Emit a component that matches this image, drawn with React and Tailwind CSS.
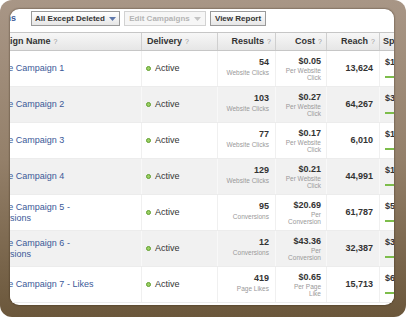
const rows = [
  { name: 'Website Campaign 1', results: '54', resultLabel: 'Website Clicks', cost: '$0.05', costLabel: ['Per Website', 'Click'], reach: '13,624', spend: '$1.62' },
  { name: 'Website Campaign 2', results: '103', resultLabel: 'Website Clicks', cost: '$0.27', costLabel: ['Per Website', 'Click'], reach: '64,267', spend: '$3.84' },
  { name: 'Website Campaign 3', results: '77', resultLabel: 'Website Clicks', cost: '$0.17', costLabel: ['Per Website', 'Click'], reach: '6,010', spend: '$1.31' },
  { name: 'Website Campaign 4', results: '129', resultLabel: 'Website Clicks', cost: '$0.21', costLabel: ['Per Website', 'Click'], reach: '44,991', spend: '$1.77' },
  { name: 'Website Campaign 5 - Conversions', results: '95', resultLabel: 'Conversions', cost: '$20.69', costLabel: ['Per', 'Conversion'], reach: '61,787', spend: '$5.26' },
  { name: 'Website Campaign 6 - Conversions', results: '12', resultLabel: 'Conversions', cost: '$43.36', costLabel: ['Per', 'Conversion'], reach: '32,387', spend: '$3.60' },
  { name: 'Website Campaign 7 - Likes', results: '419', resultLabel: 'Page Likes', cost: '$0.65', costLabel: ['Per Page', 'Like'], reach: '15,713', spend: '$6.12' }
];

const Caret = ({ color }) => (
  <svg width="7" height="4" viewBox="0 0 7 4" className="ml-[4px] shrink-0">
    <polygon points="0,0 7,0 3.5,4" fill={color} />
  </svg>
);

const Help = () => <span className="ml-[3px] text-[7px] font-normal text-[#9a9a9a]">?</span>;

const App = () => {
  return (
    <div className="w-[406px] h-[317px] bg-white" style={{ fontFamily: '"Liberation Sans", Arial, sans-serif' }}>
      <div className="h-full rounded-[12px] bg-gradient-to-b from-[#a89686] via-[#94806a] to-[#6b573b] pl-[10px] pt-[9px] pr-[12px] pb-[12px]">
        <div className="h-full bg-white rounded-[9px] overflow-hidden shadow-[0_0_2px_rgba(40,25,10,0.8)]">
          {/* toolbar */}
          <div className="h-[23px] flex items-start pt-[2px] whitespace-nowrap">
            <div className="w-[6px] flex justify-end overflow-hidden">
              <span className="text-[9px] leading-[15px] font-bold text-[#3b5998]">Campaigns</span>
            </div>
            <div className="ml-[15px] w-[89px] h-[15px] flex items-center justify-center border border-[#9a9a9a] bg-gradient-to-b from-white to-[#e6e6e6] text-[8px] font-bold text-[#333]">
              All Except Deleted
              <Caret color="#5f78ab" />
            </div>
            <div className="ml-[4px] w-[82px] h-[15px] flex items-center justify-center border border-[#d2d2d2] bg-[#f6f6f6] text-[8px] font-bold text-[#b4b4b4]">
              Edit Campaigns
              <Caret color="#c4c4c4" />
            </div>
            <div className="ml-[4px] w-[56px] h-[15px] flex items-center justify-center border border-[#9a9a9a] bg-gradient-to-b from-white to-[#e6e6e6] text-[8px] font-bold text-[#333]">
              View Report
            </div>
          </div>

          {/* table */}
          <div className="ml-[-35px] w-[465px]">
            <div className="h-[19px] flex border-y border-[#c6c6c6] bg-gradient-to-b from-[#f7f7f7] to-[#e6e6e6] text-[9px] font-bold text-[#333] leading-[17px] whitespace-nowrap">
              <div className="w-[167px] pl-[5px] border-r border-[#cfcfcf]">Campaign Name<Help /></div>
              <div className="w-[76px] pl-[5px] border-r border-[#cfcfcf]">Delivery<Help /></div>
              <div className="w-[58px] pr-[4px] text-right border-r border-[#cfcfcf]">Results<Help /></div>
              <div className="w-[51px] pr-[4px] text-right border-r border-[#cfcfcf]">Cost<Help /></div>
              <div className="w-[53px] pr-[4px] text-right border-r border-[#cfcfcf]">Reach<Help /></div>
              <div className="w-[60px] pl-[3px]">Spent<Help /></div>
            </div>

            {rows.map((row, i) => {
              const bg = i % 2 === 1 ? 'bg-[#f1f1f1]' : 'bg-white';
              const line = i % 2 === 1 ? 'border-[#f8f8f8]' : 'border-[#f0f0f0]';
              return (
                <div key={row.name} className={`h-[36px] flex ${bg} border-b border-[#ececec] text-[9px] text-[#333]`}>
                  <div className={`w-[167px] pl-[6px] flex items-center border-r ${line}`}>
                    <span className="w-[125px] leading-[11px] text-[#3b5998]">{row.name}</span>
                  </div>
                  <div className={`w-[76px] pl-[4px] flex items-center border-r ${line}`}>
                    <span className="w-[5px] h-[5px] rounded-full bg-[#9bd064] border border-[#5f9e2c]"></span>
                    <span className="ml-[4px]">Active</span>
                  </div>
                  <div className={`w-[58px] pr-[6px] pt-[5px] text-right border-r ${line}`}>
                    <div className="font-bold leading-[12px]">{row.results}</div>
                    <div className="text-[6.5px] leading-[9px] text-[#999]">{row.resultLabel}</div>
                  </div>
                  <div className={`w-[51px] pr-[5px] pt-[4px] text-right border-r ${line}`}>
                    <div className="font-bold leading-[12px]">{row.cost}</div>
                    {row.costLabel.map((l) => (
                      <div key={l} className="text-[6.5px] leading-[7px] text-[#999]">{l}</div>
                    ))}
                  </div>
                  <div className={`w-[53px] pr-[6px] flex items-center justify-end font-bold border-r ${line}`}>
                    {row.reach}
                  </div>
                  <div className="w-[60px] pl-[5px] pt-[5px]">
                    <div className="font-bold leading-[12px]">{row.spend}</div>
                    <div className="mt-[8px] h-[2px] w-[40px] bg-[#7dbd4b]"></div>
                  </div>
                </div>
              );
            })}
          </div>
        </div>
      </div>
    </div>
  );
};

export default App;
